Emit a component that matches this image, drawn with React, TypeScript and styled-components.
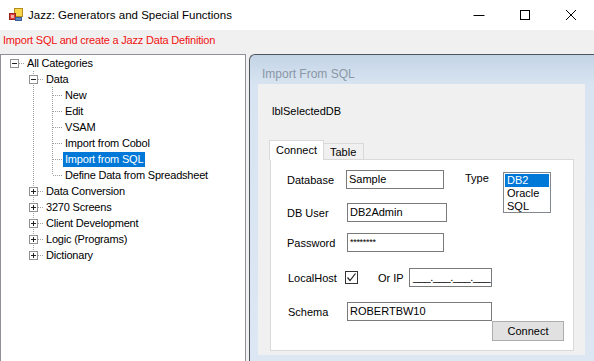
import React from 'react'
import styled, { createGlobalStyle } from 'styled-components'

const GlobalStyle = createGlobalStyle`
  html, body {
    margin: 0;
    padding: 0;
  }
  body {
    font-family: "Liberation Sans", Arial, sans-serif;
    font-size: 11px;
    color: #000;
    background: #f0f0f0;
  }
`

type Expander = 'plus' | 'minus' | undefined

interface TreeNode {
  label: string
  guides: boolean[]
  expander?: Expander
  root?: boolean
  last?: boolean
  selected?: boolean
}

const treeNodes: TreeNode[] = [
  { label: 'All Categories', guides: [], expander: 'minus', root: true, last: true },
  { label: 'Data', guides: [false], expander: 'minus' },
  { label: 'New', guides: [false, true] },
  { label: 'Edit', guides: [false, true] },
  { label: 'VSAM', guides: [false, true] },
  { label: 'Import from Cobol', guides: [false, true] },
  { label: 'Import from SQL', guides: [false, true], selected: true },
  { label: 'Define Data from Spreadsheet', guides: [false, true], last: true },
  { label: 'Data Conversion', guides: [false], expander: 'plus' },
  { label: '3270 Screens', guides: [false], expander: 'plus' },
  { label: 'Client Development', guides: [false], expander: 'plus' },
  { label: 'Logic (Programs)', guides: [false], expander: 'plus' },
  { label: 'Dictionary', guides: [false], expander: 'plus', last: true },
]

// ---------- svg bits ----------

function AppIcon() {
  return (
    <svg width="16" height="16" viewBox="0 0 16 16">
      <rect x="6.5" y="1.5" width="8" height="8" fill="#f7d64a" stroke="#b58d1c" />
      <rect x="1.5" y="6.5" width="6" height="6" fill="#e0403a" stroke="#9a2420" />
      <rect x="7.5" y="10.5" width="6" height="3" fill="#5d86c4" stroke="#3a5f98" />
      <rect x="3" y="8" width="3" height="3" fill="#f3b0a8" />
    </svg>
  )
}

function MinimizeIcon() {
  return (
    <svg width="12" height="12" viewBox="0 0 12 12">
      <line x1="0.5" y1="6.5" x2="11.5" y2="6.5" stroke="#000" />
    </svg>
  )
}

function MaximizeIcon() {
  return (
    <svg width="12" height="12" viewBox="0 0 12 12">
      <rect x="1.5" y="1.5" width="9" height="9" fill="none" stroke="#000" />
    </svg>
  )
}

function CloseIcon() {
  return (
    <svg width="12" height="12" viewBox="0 0 12 12">
      <path d="M1 1 L11 11 M11 1 L1 11" stroke="#000" strokeWidth="1" />
    </svg>
  )
}

function GuideLine({ on }: { on: boolean }) {
  return (
    <svg width="19" height="16" viewBox="0 0 19 16">
      {on && <line x1="9.5" y1="0" x2="9.5" y2="16" stroke="#a0a0a0" strokeDasharray="1 1" />}
    </svg>
  )
}

function NodeConnector({ expander, root, last }: { expander?: Expander; root?: boolean; last?: boolean }) {
  return (
    <svg width="19" height="16" viewBox="0 0 19 16">
      <g stroke="#a0a0a0" strokeDasharray="1 1">
        {!root && <line x1="9.5" y1="0" x2="9.5" y2={last ? 8 : 16} />}
        <line x1="10" y1="8.5" x2="19" y2="8.5" />
      </g>
      {expander && (
        <g>
          <rect x="5.5" y="4.5" width="8" height="8" fill="#fff" stroke="#919191" />
          <line x1="7" y1="8.5" x2="12" y2="8.5" stroke="#222" />
          {expander === 'plus' && <line x1="9.5" y1="6" x2="9.5" y2="11" stroke="#222" />}
        </g>
      )}
    </svg>
  )
}

function CheckMark() {
  return (
    <svg width="11" height="11" viewBox="0 0 11 11">
      <path d="M1.5 5.5 L4 8.5 L9.5 1.5" fill="none" stroke="#222" strokeWidth="1.2" />
    </svg>
  )
}

// ---------- app ----------

export default function App() {
  return (
    <>
      <GlobalStyle />
      <Window>
        <TitleBar>
          <AppIcon />
          <TitleText>Jazz: Generators and Special Functions</TitleText>
          <Controls>
            <ControlButton>
              <MinimizeIcon />
            </ControlButton>
            <ControlButton>
              <MaximizeIcon />
            </ControlButton>
            <ControlButton>
              <CloseIcon />
            </ControlButton>
          </Controls>
        </TitleBar>

        <Hint>Import SQL and create a Jazz Data Definition</Hint>

        <Main>
          <Tree>
            {treeNodes.map((node) => (
              <TreeRow key={node.label}>
                {node.guides.map((g, i) => (
                  <GuideLine key={i} on={g} />
                ))}
                <NodeConnector expander={node.expander} root={node.root} last={node.last} />
                <TreeLabel $selected={node.selected}>{node.label}</TreeLabel>
              </TreeRow>
            ))}
          </Tree>

          <Panel>
            <PanelHeader>Import From SQL</PanelHeader>
            <PanelBody>
              <SelectedDb>lblSelectedDB</SelectedDb>

              <TabStrip>
                <Tab $active>Connect</Tab>
                <Tab>Table</Tab>
              </TabStrip>

              <TabPage>
                <TopSection>
                  <Fields>
                    <FieldRow>
                      <FieldLabel $w={59}>Database</FieldLabel>
                      <TextBox $w={98}>Sample</TextBox>
                    </FieldRow>
                    <FieldRow $gap={14}>
                      <FieldLabel $w={60}>DB User</FieldLabel>
                      <TextBox $w={100}>DB2Admin</TextBox>
                    </FieldRow>
                    <FieldRow $gap={11}>
                      <FieldLabel $w={60}>Password</FieldLabel>
                      <TextBox $w={97}>
                        <Stars>********</Stars>
                      </TextBox>
                    </FieldRow>
                  </Fields>
                  <TypeColumn>
                    <TypeLabel>Type</TypeLabel>
                    <ListBox>
                      <ListItem $selected>DB2</ListItem>
                      <ListItem>Oracle</ListItem>
                      <ListItem>SQL</ListItem>
                    </ListBox>
                  </TypeColumn>
                </TopSection>

                <FieldRow $gap={16} $shift={1}>
                  <FieldLabel $w={57}>LocalHost</FieldLabel>
                  <CheckBox>
                    <CheckMark />
                  </CheckBox>
                  <OrIpLabel>Or IP</OrIpLabel>
                  <TextBox $w={83}>
                    <IpMask>___.___.___.___</IpMask>
                  </TextBox>
                </FieldRow>

                <FieldRow $gap={15} $shift={1}>
                  <FieldLabel $w={59}>Schema</FieldLabel>
                  <TextBox $w={145}>ROBERTBW10</TextBox>
                </FieldRow>

                <ButtonRow>
                  <PushButton>Connect</PushButton>
                </ButtonRow>
              </TabPage>
            </PanelBody>
          </Panel>
        </Main>
      </Window>
    </>
  )
}

// ============ styles ============

const Window = styled.div`
  width: 594px;
  height: 361px;
  overflow: hidden;
  background: #f0f0f0;
  display: flex;
  flex-direction: column;
`

const TitleBar = styled.header`
  height: 30px;
  flex: none;
  background: #fff;
  display: flex;
  align-items: center;
  padding-left: 8px;
`

const TitleText = styled.span`
  margin-left: 4px;
  font-size: 11.5px;
  color: #000;
`

const Controls = styled.div`
  margin-left: auto;
  display: flex;
  height: 100%;
`

const ControlButton = styled.div`
  width: 46px;
  height: 30px;
  display: flex;
  align-items: center;
  justify-content: center;
`

const Hint = styled.div`
  height: 24px;
  flex: none;
  box-sizing: border-box;
  padding: 3px 0 0 3px;
  line-height: 14px;
  font-size: 11px;
  letter-spacing: -0.2px;
  color: #f01010;
`

const Main = styled.div`
  flex: 1;
  min-height: 0;
  display: flex;
  gap: 3px;
`

const Tree = styled.div`
  width: 246px;
  flex: none;
  box-sizing: border-box;
  background: #fff;
  border: 1px solid #8e9298;
  border-bottom: none;
  padding-left: 4px;
  display: flex;
  flex-direction: column;
`

const TreeRow = styled.div`
  display: flex;
  align-items: center;
  height: 16px;

  svg {
    flex: none;
    display: block;
  }
`

const TreeLabel = styled.span<{ $selected?: boolean }>`
  margin-left: 1px;
  padding: 0 2px;
  height: 15px;
  line-height: 15px;
  white-space: nowrap;
  letter-spacing: -0.2px;
  background: ${(p) => (p.$selected ? '#0078d7' : 'transparent')};
  color: ${(p) => (p.$selected ? '#fff' : '#000')};
`

const Panel = styled.section`
  flex: 1;
  display: flex;
  flex-direction: column;
  border-top: 1px solid #50555c;
  border-left: 1px solid #50555c;
  border-top-left-radius: 6px;
  background: linear-gradient(#c4d4e6, #d8e4f1 30px, #dce7f3);
  padding: 0 9px 6px 8px;
`

const PanelHeader = styled.div`
  height: 29px;
  flex: none;
  box-sizing: border-box;
  padding: 12px 0 0 4px;
  font-size: 12px;
  line-height: 14px;
  color: #8a97a6;
`

const PanelBody = styled.div`
  flex: 1;
  background: #f0f0f0;
  padding: 20px 11px 4px 11px;
  display: flex;
  flex-direction: column;
`

const SelectedDb = styled.div`
  margin-left: 3px;
  line-height: 14px;
  height: 14px;
`

const TabStrip = styled.div`
  margin-top: 22px;
  display: flex;
  align-items: flex-end;
  position: relative;
  z-index: 1;
  margin-bottom: -1px;
`

const Tab = styled.div<{ $active?: boolean }>`
  box-sizing: border-box;
  height: ${(p) => (p.$active ? '20px' : '17px')};
  padding: ${(p) => (p.$active ? '3px 6px 0 6px' : '2px 7px 0 6px')};
  border: 1px solid #d9d9d9;
  border-bottom: ${(p) => (p.$active ? 'none' : '1px solid #d9d9d9')};
  margin-left: ${(p) => (p.$active ? '0' : '-1px')};
  background: ${(p) => (p.$active ? '#fff' : '#f0f0f0')};
  line-height: 13px;
`

const TabPage = styled.div`
  margin-left: 1px;
  width: 304px;
  height: 192px;
  box-sizing: border-box;
  background: #fff;
  border: 1px solid #d9d9d9;
  padding: 10px 0 0 16px;
  display: flex;
  flex-direction: column;
`

const TopSection = styled.div`
  display: flex;
  align-items: flex-start;
`

const Fields = styled.div`
  width: 178px;
  display: flex;
  flex-direction: column;
`

const FieldRow = styled.div<{ $gap?: number; $shift?: number }>`
  display: flex;
  align-items: center;
  margin-top: ${(p) => p.$gap ?? 0}px;
  padding-left: ${(p) => p.$shift ?? 0}px;
`

const FieldLabel = styled.span<{ $w: number }>`
  width: ${(p) => p.$w}px;
  flex: none;
  padding-top: 2px;
  line-height: 13px;
`

const TextBox = styled.div<{ $w: number }>`
  width: ${(p) => p.$w}px;
  height: 19px;
  box-sizing: border-box;
  border: 1px solid #7a7a7a;
  background: #fff;
  padding: 0 0 0 2px;
  line-height: 16px;
  white-space: nowrap;
  overflow: hidden;
`

const Stars = styled.span`
  font-size: 9px;
  letter-spacing: -0.3px;
  vertical-align: top;
`

const IpMask = styled.span`
  display: inline-block;
  margin-left: 1px;
  letter-spacing: -0.35px;
  line-height: 15px;
`

const TypeColumn = styled.div`
  display: flex;
  align-items: flex-start;
`

const TypeLabel = styled.span`
  width: 38px;
  margin-top: 2px;
  line-height: 13px;
`

const ListBox = styled.div`
  margin-top: 2px;
  width: 48px;
  height: 41px;
  box-sizing: border-box;
  border: 1px solid #828790;
  background: #fff;
  padding: 1px;
`

const ListItem = styled.div<{ $selected?: boolean }>`
  height: 13px;
  line-height: 13px;
  padding-left: 2px;
  background: ${(p) => (p.$selected ? '#0078d7' : 'transparent')};
  color: ${(p) => (p.$selected ? '#fff' : '#000')};
`

const CheckBox = styled.div`
  width: 13px;
  height: 13px;
  box-sizing: border-box;
  border: 1px solid #333;
  background: #fff;
  display: flex;
  align-items: center;
  justify-content: center;
`

const OrIpLabel = styled.span`
  margin-left: 20px;
  width: 31px;
  padding-top: 1px;
  line-height: 13px;
`

const ButtonRow = styled.div`
  display: flex;
  padding-left: 205px;
`

const PushButton = styled.div`
  width: 72px;
  height: 20px;
  box-sizing: border-box;
  border: 1px solid #adadad;
  background: #e1e1e1;
  display: flex;
  align-items: center;
  justify-content: center;
  line-height: 13px;
`
